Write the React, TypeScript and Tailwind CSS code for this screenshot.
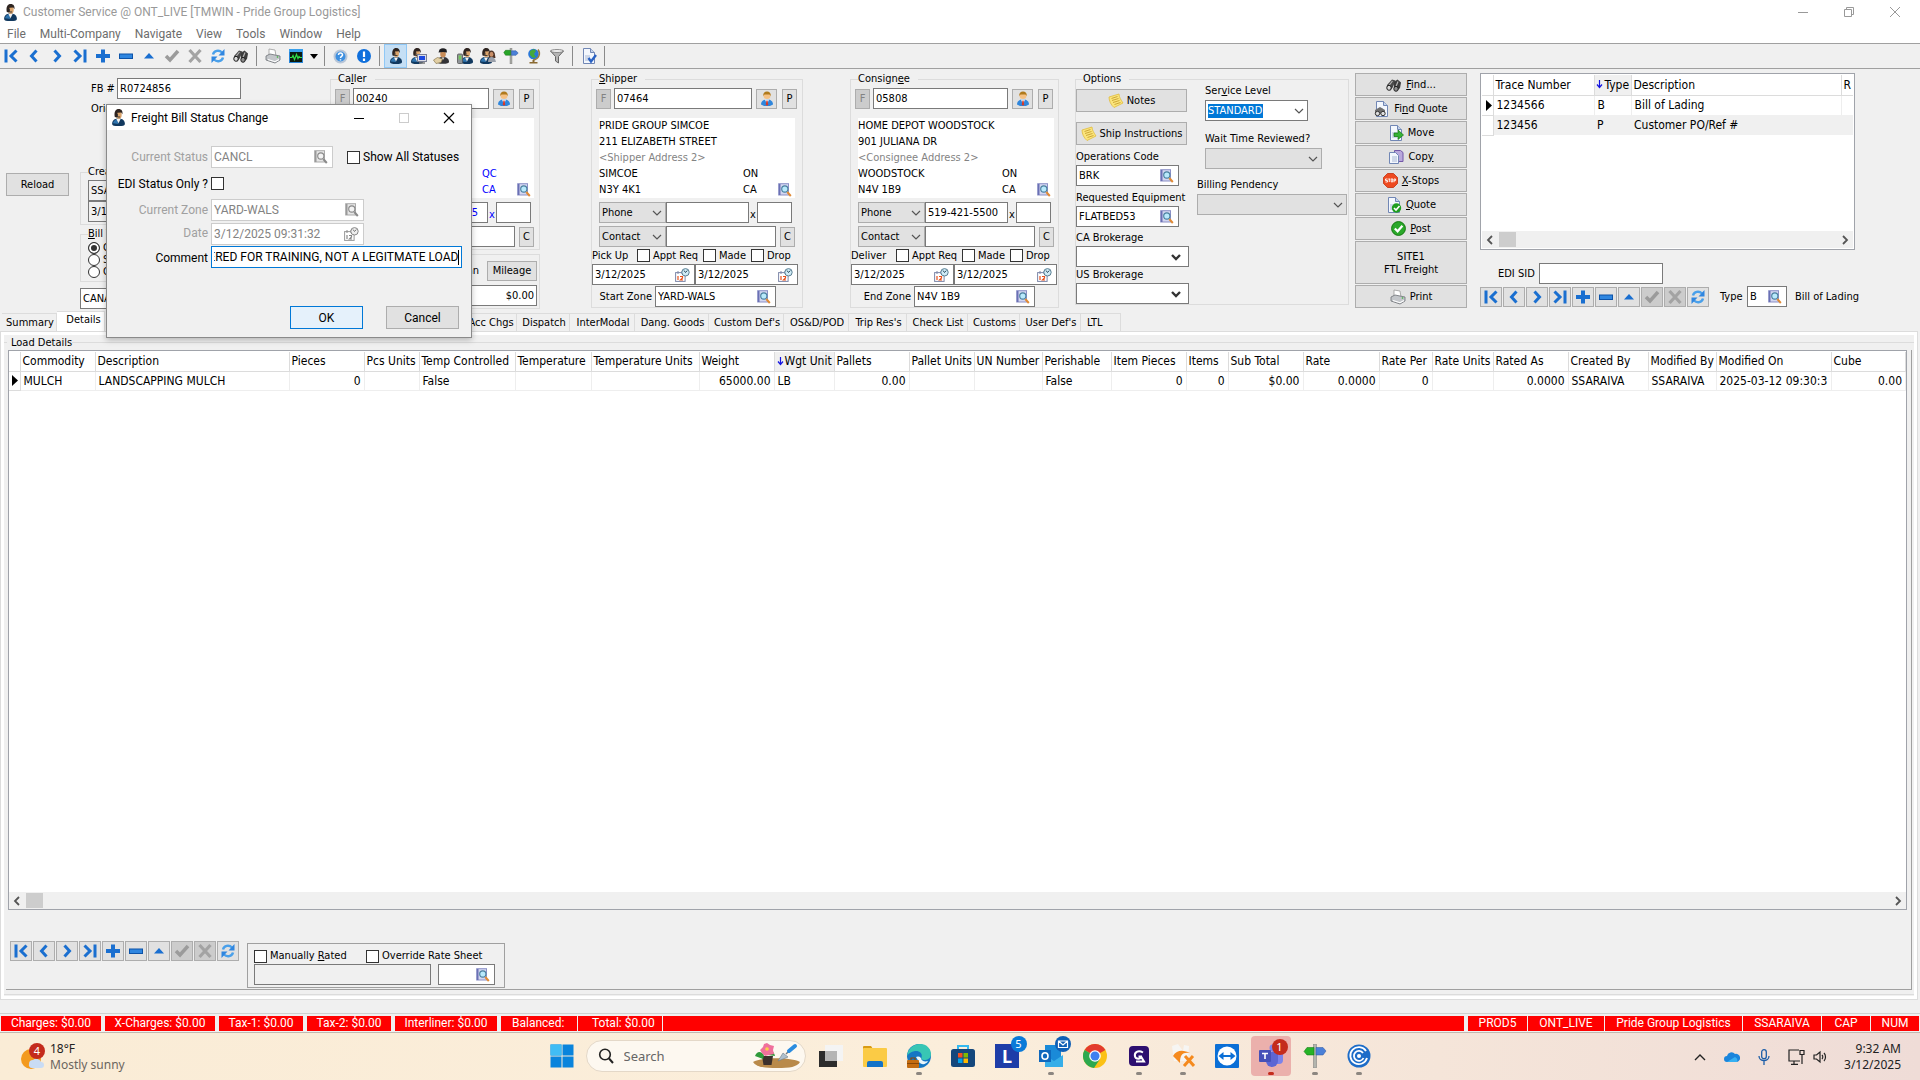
import { useEffect, useRef, type ReactNode } from 'react';
import { clsx } from 'clsx';
import { twMerge } from 'tailwind-merge';

/* ---------- icons ---------- */

function AgentIcon({ size = 16, kind = 'plain' }: { size?: number; kind?: 'plain' | 'pc' | 'phone' | 'pair' }) {
  return (
    <svg width={size} height={size} viewBox="0 0 16 16" className="shrink-0">
      <g transform={kind === 'plain' ? 'translate(2 0)' : kind === 'phone' ? 'translate(4 0)' : ''}>
        <path d="M0 14c0-3 2-5 6-5s6 2 6 5c0 1.500-2 2-6 2s-6-.5-6-2z" fill="#12395f" />
        <path d="M.8 13.500c.4-2.300 2-3.600 4-3.800L6 14z" fill="#2f74ae" />
        <path d="M4 9.500h4L6 13.500z" fill="#f4f4f4" />
        <ellipse cx="6.300" cy="5.500" rx="2.700" ry="3.800" fill="#dca56c" />
        <path d="M2.500 7.500C1.500 2.500 3.500 0 6.200 0s4 2 3.500 5L8.600 3.200 5 3.500 4.600 8z" fill="#2e2420" />
        <path d="M5 4.500v3h2.500" fill="none" stroke="#333" strokeWidth=".9" />
      </g>
      {kind === 'pair' && (
        <>
          <path d="M8.500 7c-1-6 6.500-6 6.500 0l.5 3H9z" fill="#4e3326" />
          <ellipse cx="11.500" cy="6.300" rx="1.900" ry="2.500" fill="#c98f68" />
          <path d="M8 14c0-3.500 1.500-5 3.500-5s4 1.500 4.500 5z" fill="#9aa0aa" />
        </>
      )}
      {kind === 'pc' && (
        <>
          <rect x="6.500" y="6.500" width="9" height="7" fill="#dcdde6" stroke="#7a7f94" />
          <rect x="8" y="8" width="6" height="4" fill="#1c49e0" />
          <path d="M8 15h6" stroke="#777" strokeWidth="1.500" />
        </>
      )}
      {kind === 'phone' && (
        <>
          <rect x=".5" y="6" width="5" height="9.500" rx="1" fill="#8f9498" stroke="#555" strokeWidth=".8" />
          <rect x="1.700" y="7.500" width="2.600" height="4" fill="#74c95a" />
        </>
      )}
    </svg>
  );
}

function DriverIcon() {
  return (
    <svg width="17" height="16" viewBox="0 0 17 16" className="shrink-0">
      <path d="M4 14c0-3 2-5 6-5s6 2 6 5c0 1-2 1.800-6 1.800S4 15 4 14z" fill="#333336" />
      <ellipse cx="10" cy="6" rx="2.800" ry="3.500" fill="#c98d58" />
      <path d="M5.500 4.500l1-3Q10-.8 13.500 1.500L14 4.500 10 4z" fill="#1f1f22" />
      <path d="M8.500 9.500h3L10 12z" fill="#d8d8d8" />
      <path d="M.5 12l4-2.500 5 1.500-1.500 3.500-5 1z" fill="#e2cfa4" stroke="#8a7850" strokeWidth=".7" />
    </svg>
  );
}

function NavGlyph({ name, size = 16 }: { name: string; size?: number }) {
  const blue = { fill: 'none', stroke: '#1a6fd0', strokeWidth: 3 };
  return (
    <svg width={size} height={size} viewBox="0 0 16 16" className="shrink-0">
      {name === 'First' && <path d="M3 1.500v13M13.500 2.500L8 8l5.500 5.500" {...blue} />}
      {name === 'Previous' && <path d="M10.500 2.500L5.500 8l5 5.500" {...blue} />}
      {name === 'Next' && <path d="M5.500 2.500l5 5.500-5 5.500" {...blue} />}
      {name === 'Last' && <path d="M13 1.500v13M2.500 2.500L8 8l-5.500 5.500" {...blue} />}
      {name === 'Insert' && <path d="M8 1.500v13M1 8h14" {...blue} strokeWidth={4} />}
      {name === 'Delete' && <rect x="1.500" y="6" width="13" height="4.500" fill="#2f86e0" stroke="#0d53a8" />}
      {name === 'Edit' && <path d="M8 5l5 5.500H3z" fill="#1a6fd0" />}
      {name === 'Post edit' && <path d="M2 8l4 4 8-9" fill="none" stroke="#9b9b9b" strokeWidth="3.500" />}
      {name === 'Cancel edit' && <path d="M2.500 2l11 12M13.500 2l-11 12" fill="none" stroke="#a3a3a3" strokeWidth="3.200" />}
      {name === 'Refresh' && (
        <>
          <path d="M3 6.500C4 2.500 9 1.500 12 4.500" fill="none" stroke="#4aa0ea" strokeWidth="2.400" />
          <path d="M14.500 1v6.500H8.500z" fill="#2f86e0" />
          <path d="M13 9.500c-1 4-6 5-9 2" fill="none" stroke="#4aa0ea" strokeWidth="2.400" />
          <path d="M1.500 15V8.500h6z" fill="#2f86e0" />
        </>
      )}
    </svg>
  );
}

function BinocularsIcon() {
  return (
    <svg width="16" height="14" viewBox="0 0 16 14" className="shrink-0">
      <path d="M1 7l5-5.500 3.500 1L7 9l-2.500 3.500L.8 11z" fill="#4a4a4a" />
      <path d="M8 4l3.500-2.500L15 4.500 14 10l-3 3-3-2.500z" fill="#3c3c3c" />
      <path d="M3 7.500L6.500 3M10 8.500l2-5" stroke="#b5b5b5" strokeWidth="1.200" />
      <ellipse cx="3" cy="9.800" rx="2.200" ry="2.500" fill="#d8d8d8" stroke="#222" />
      <ellipse cx="10" cy="10.800" rx="2.200" ry="2.500" fill="#8d8d8d" stroke="#222" />
    </svg>
  );
}

function PrinterIcon() {
  return (
    <svg width="16" height="16" viewBox="0 0 16 16" className="shrink-0">
      <path d="M4 1l6 1 1 6-7 1z" fill="#fff" stroke="#9a9a9a" strokeWidth=".8" />
      <path d="M1 8l4-2 10 2v4l-5 3-9-3z" fill="#c3c6ca" stroke="#6d7176" strokeWidth=".8" />
      <path d="M3 11.500l7 2.200 4-2.200" fill="none" stroke="#fff" strokeWidth="1.200" />
      <circle cx="12.500" cy="9" r=".8" fill="#35b335" />
    </svg>
  );
}

function LookupIcon({ muted = false }: { muted?: boolean }) {
  return (
    <svg width="14" height="14" viewBox="0 0 14 14" className="shrink-0">
      <rect x=".7" y=".7" width="9.800" height="11.300" fill={muted ? '#e6e6e6' : '#d3d6f0'} stroke={muted ? '#aaa' : '#8b90c6'} strokeWidth="1" />
      <path d="M1.700 1v11" stroke={muted ? '#999' : '#6a70b4'} strokeWidth="1.600" />
      <circle cx="6.800" cy="6" r="3.100" fill={muted ? '#f3f3f3' : '#b8e9fb'} stroke={muted ? '#8a8a8a' : '#49809f'} strokeWidth="1.100" />
      <path d="M9.300 9l3.500 4" stroke={muted ? '#8a8a8a' : '#e08a35'} strokeWidth="2" />
    </svg>
  );
}

function CalendarIcon({ muted = false }: { muted?: boolean }) {
  return (
    <svg width="15" height="14" viewBox="0 0 15 14" className="shrink-0">
      <rect x=".6" y="4.600" width="9.500" height="8.800" fill="#fff" stroke={muted ? '#999' : '#7d87a8'} />
      <path d="M3 3v3M7 3v3" stroke={muted ? '#888' : '#7d87a8'} />
      <path d="M3 8v4M5 8.500h2.500v1.500L5.500 12H8" fill="none" stroke={muted ? '#888' : '#e8501c'} strokeWidth="1.200" />
      <circle cx="10.500" cy="4.300" r="3.700" fill={muted ? '#eee' : '#cfeaf5'} stroke={muted ? '#888' : '#5b7f93'} />
      <path d="M9 2.500l1.500 2L12.300 2.500" fill="none" stroke={muted ? '#777' : '#2c4d60'} />
    </svg>
  );
}

function PersonIcon() {
  return (
    <svg width="14" height="16" viewBox="0 0 14 16" className="shrink-0">
      <path d="M1 13.500C1 10.500 3 8.500 7 8.500s6 2 6 5L10 15H4z" fill="#2f86dc" />
      <path d="M5 8.500h4l-2 5z" fill="#fff" />
      <path d="M6.400 9.500h1.200l.6 4L7 15l-1.200-1.500z" fill="#d43a2a" />
      <circle cx="7" cy="4.500" r="3.500" fill="#f5c184" />
      <path d="M3.300 5C3 2 4.500.5 7 .5S11 2 10.700 5L9.500 3.500h-5z" fill="#b07a1c" />
    </svg>
  );
}

function NoteIcon() {
  return (
    <svg width="16" height="16" viewBox="0 0 16 16" className="shrink-0">
      <path d="M1 4l10-3c0 3 2 6 4 9L6 14.500C3 12 1 8 1 4z" fill="#fbe57c" stroke="#e0bb3c" strokeWidth=".8" />
      <path d="M3.500 5.500l6-2M4 7.500l6.500-2M5 9.500l6.500-2M6.500 11.500l6-2" stroke="#c79f2e" strokeWidth=".9" />
    </svg>
  );
}

function DocIcon({ badge }: { badge: 'find' | 'move' | 'copy' | 'ok' | 'check' }) {
  return (
    <svg width="16" height="16" viewBox="0 0 16 16" className="shrink-0">
      {badge === 'copy' && <path d="M6.500 1.500h6l2.500 2v9H6.500z" fill="#b9a8dc" stroke="#7358a8" />}
      <path d={badge === 'copy' ? 'M1.500 3.500h6l3 3v8h-9z' : 'M2.500.5h7l4 4v11h-11z'} fill="#f3f7fd" stroke="#7187b5" />
      {badge !== 'copy' && <path d="M9.500.5v4h4" fill="#c5d3ea" stroke="#7187b5" />}
      <path d="M4 8h5M4 10h5M4 12h5" stroke="#a9b8d4" />
      {badge === 'move' && <path d="M6 8h4V5l5.500 5L10 14.500v-3H6z" fill="#35b335" stroke="#12700f" strokeWidth=".7" />}
      {badge === 'ok' && (
        <>
          <circle cx="10.500" cy="11" r="4.700" fill="#1f9e1f" />
          <path d="M8 11l2 2 3.500-4" fill="none" stroke="#fff" strokeWidth="1.600" />
        </>
      )}
      {badge === 'check' && <path d="M7.500 10l2.500 3.500L15 7" fill="none" stroke="#2a62c4" strokeWidth="2.400" />}
      {badge === 'find' && (
        <>
          <path d="M1 9l5-3 5 3v4H1z" fill="#6f6f6f" />
          <circle cx="3.500" cy="12.500" r="2.200" fill="#ddd" stroke="#333" />
          <circle cx="9" cy="12.500" r="2.200" fill="#ddd" stroke="#333" />
        </>
      )}
    </svg>
  );
}

function StopIcon() {
  return (
    <svg width="15" height="15" viewBox="0 0 15 15" className="shrink-0">
      <path d="M4.500.5h6l4 4v6l-4 4h-6l-4-4v-6z" fill="#ee4a20" stroke="#c22f0c" strokeWidth=".8" />
      <path d="M4.500 6h-2v1.500h2V9h-2M5.300 6h2M6.300 6v3M8.200 5.900h1.500v3H8.200zM11 9.300V6h1.600v1.700H11" fill="none" stroke="#fff" strokeWidth=".9" />
    </svg>
  );
}

function OkIcon() {
  return (
    <svg width="15" height="15" viewBox="0 0 15 15" className="shrink-0">
      <circle cx="7.500" cy="7.500" r="6.900" fill="#2aa82a" stroke="#14780f" />
      <path d="M3.800 7.500l2.800 2.800 4.800-5.500" fill="none" stroke="#fff" strokeWidth="2.200" />
    </svg>
  );
}

function SignpostIcon() {
  return (
    <svg width="16" height="16" viewBox="0 0 16 16" className="shrink-0">
      <rect x="7" y="0" width="2" height="16" fill="#a9aaa5" stroke="#777" strokeWidth=".4" />
      <path d="M7.500 2.300H2.500L.8 4.500l1.700 2.700h5z" fill="#27a427" stroke="#0f700f" strokeWidth=".5" />
      <path d="M8.500 2.800h4.500l2.200 2.200L13 7.300H8.500z" fill="#4b80d8" stroke="#2a559e" strokeWidth=".5" />
    </svg>
  );
}

function GlobeIcon() {
  return (
    <svg width="16" height="16" viewBox="0 0 16 16" className="shrink-0">
      <circle cx="7.500" cy="6" r="5.300" fill="#2a78d8" />
      <path d="M4 3l4-2 2 2-2 3 2 3-3 1-3-3z" fill="#46a83c" />
      <path d="M12 1.500c3 4 1 10-5 10.500" fill="none" stroke="#9c7a3c" strokeWidth="1.500" />
      <path d="M6.500 12h2v2h3v1.500h-8V14h3z" fill="#8a6a32" />
    </svg>
  );
}

function Chevron({ bold = false }: { bold?: boolean }) {
  return (
    <svg width="12" height="8" viewBox="0 0 12 8" className="shrink-0 pointer-events-none">
      <path d="M2 2l4 4 4-4" fill="none" stroke={bold ? '#333' : '#555'} strokeWidth={bold ? 2.400 : 1.200} />
    </svg>
  );
}

function SortArrow() {
  return (
    <svg width="7" height="9" viewBox="0 0 7 9" className="shrink-0">
      <path d="M3.500 0v7M1 4.500L3.500 7.500 6 4.500" fill="none" stroke="#1414e0" strokeWidth="1.200" />
    </svg>
  );
}

/* ---------- form controls ---------- */

function Field({ label, value = '', className, icon, align }: {
  label: string;
  value?: string;
  className?: string;
  icon?: ReactNode;
  align?: 'right';
}) {
  return (
    <div className={twMerge('flex h-[21px] items-center border border-[#7a7a7a] bg-white pl-0.5', icon ? 'pr-1' : 'pr-0.5', className)}>
      <input aria-label={label} defaultValue={value} className={clsx('w-0 min-w-0 flex-1 bg-transparent outline-none', align === 'right' && 'text-right')} />
      {icon}
    </div>
  );
}

function Combo({ label, value = '', className, bold, grey, highlight }: {
  label: string;
  value?: string;
  className?: string;
  bold?: boolean;
  grey?: boolean;
  highlight?: boolean;
}) {
  return (
    <div className={clsx('flex h-[21px] items-center border pl-0.5', bold ? 'pr-1.5' : 'pr-0.5', grey ? 'border-[#adadad] bg-[#e1e1e1]' : 'border-[#7a7a7a] bg-white', className)}>
      <div className="flex min-w-0 flex-1">
        <select aria-label={label} className={clsx('appearance-none outline-none leading-[14px]', highlight ? 'bg-[#0078d7] text-white' : 'w-full bg-transparent')}>
          <option>{value}</option>
        </select>
      </div>
      <Chevron bold={bold} />
    </div>
  );
}

function Check({ label, className, children }: { label?: string; className?: string; children?: ReactNode }) {
  return (
    <label className={clsx('flex items-center gap-[3px] whitespace-nowrap', className)}>
      <input type="checkbox" aria-label={label} className="size-[13px] shrink-0 appearance-none border border-[#333] bg-white" />
      {children}
    </label>
  );
}

function Btn({ children, className, disabled }: { children: ReactNode; className?: string; disabled?: boolean }) {
  return (
    <button
      type="button"
      disabled={disabled}
      className={clsx(
        'flex shrink-0 items-center justify-center border border-[#adadad]',
        disabled ? 'bg-[#cccccc] text-[#838383]' : 'bg-[#e1e1e1]',
        className,
      )}
    >
      {children}
    </button>
  );
}

function Group({ title, className, children }: { title: ReactNode; className?: string; children: ReactNode }) {
  return (
    <fieldset className={clsx('min-w-0 border border-[#dcdcdc]', className)}>
      <legend className="ml-[7px] pr-2">{title}</legend>
      {children}
    </fieldset>
  );
}

const NAV = ['First', 'Previous', 'Next', 'Last', 'Insert', 'Delete', 'Edit', 'Post edit', 'Cancel edit', 'Refresh'];

function Navigator() {
  return (
    <div className="flex gap-px">
      {NAV.map(n => (
        <button
          key={n}
          type="button"
          aria-label={n}
          className={clsx('flex h-5 w-[22px] items-center justify-center border border-[#adadad]', n.endsWith(' edit') ? 'bg-[#cccccc]' : 'bg-[#e1e1e1]')}
        >
          <NavGlyph name={n} />
        </button>
      ))}
    </div>
  );
}

function ScrollBar() {
  return (
    <div className="flex h-[17px] items-center justify-between bg-[#f0f0f0] px-1">
      <div className="flex h-full items-center gap-[5px]">
        <svg width="8" height="10" viewBox="0 0 8 10"><path d="M6 1L2 5l4 4" fill="none" stroke="#555" strokeWidth="1.800" /></svg>
        <div className="h-[15px] w-[17px] bg-[#cdcdcd]" />
      </div>
      <svg width="8" height="10" viewBox="0 0 8 10"><path d="M2 1l4 4-4 4" fill="none" stroke="#555" strokeWidth="1.800" /></svg>
    </div>
  );
}

/* ---------- header panels ---------- */

interface Party {
  title: ReactNode;
  name: string;
  code: string;
  lines: string[];
  hint: string;
  city: string;
  postal: string;
  province: string;
  country: string;
  phone: string;
  caller?: boolean;
  when?: string;
  zoneLabel?: string;
  zone?: string;
}

function PartyGroup({ p, className }: { p: Party; className?: string }) {
  return (
    <Group title={p.title} className={className}>
      <div className="flex items-center pl-1 pr-[5px] pt-px">
        <Btn disabled className="h-5 w-[15px]">F</Btn>
        <Field label={`${p.name} code`} value={p.code} className="ml-[3px] min-w-0 flex-1" />
        <Btn className="ml-1 h-5 w-[21px]"><PersonIcon /></Btn>
        <Btn className="ml-[5px] h-5 w-[15px]">P</Btn>
      </div>
      <div className={clsx('ml-[7px] mt-[9px] w-[196px] bg-white', p.caller && 'text-[#0000ff]')}>
        <div className="h-4">{p.lines[0]}</div>
        <div className="h-4">{p.lines[1]}</div>
        <div className="h-4 text-[#838383]">{p.hint}</div>
        <div className="flex">
          <span className="w-36">{p.city}</span>
          <span>{p.province}</span>
        </div>
        <div className="flex items-center">
          <span className="w-36">{p.postal}</span>
          <span className="flex-1">{p.country}</span>
          <span className="mr-[3px]"><LookupIcon /></span>
        </div>
      </div>
      <div className="ml-[7px] mt-1 flex items-center">
        <Combo label={`${p.name} phone type`} value="Phone" grey className="w-[67px]" />
        <Field label={`${p.name} phone`} value={p.phone} className={clsx('w-[83px]', p.caller && 'text-[#0000ff]')} />
        <span className={clsx('w-2 self-end text-center', p.caller && 'text-[#0000ff]')}>x</span>
        <Field label={`${p.name} extension`} className="w-[35px]" />
      </div>
      <div className="ml-[7px] mt-[3px] flex items-center">
        <Combo label={`${p.name} contact type`} value="Contact" grey className="w-[67px]" />
        <Field label={`${p.name} contact`} className="w-[110px]" />
        <Btn className="ml-1 h-5 w-[15px]">C</Btn>
      </div>
      {p.when && (
        <>
          <div className="flex h-[17px] items-center">
            <span className="w-[45px]">{p.when}</span>
            <Check className="w-[66px]">Appt Req</Check>
            <Check className="w-12">Made</Check>
            <Check>Drop</Check>
          </div>
          <div className="flex">
            <Field label={`${p.when} from`} value="3/12/2025" icon={<CalendarIcon />} className="w-[103px]" />
            <Field label={`${p.when} to`} value="3/12/2025" icon={<CalendarIcon />} className="w-[103px]" />
          </div>
          <div className="mt-px flex items-center">
            <span className="w-[60px] text-right">{p.zoneLabel}</span>
            <Field label={p.zoneLabel!} value={p.zone} icon={<LookupIcon />} className="ml-[3px] w-[121px]" />
          </div>
        </>
      )}
    </Group>
  );
}

const CALLER: Party = {
  title: <>Ca<u>l</u>ler</>, name: 'Caller', code: '00240', lines: ['', ''], hint: '', city: '', postal: '',
  province: 'QC', country: 'CA', phone: '514-555-0155', caller: true,
};
const SHIPPER: Party = {
  title: <><u>S</u>hipper</>, name: 'Shipper', code: '07464', lines: ['PRIDE GROUP SIMCOE', '211 ELIZABETH STREET'],
  hint: '<Shipper Address 2>', city: 'SIMCOE', postal: 'N3Y 4K1', province: 'ON', country: 'CA', phone: '',
  when: 'Pick Up', zoneLabel: 'Start Zone', zone: 'YARD-WALS',
};
const CONSIGNEE: Party = {
  title: <>Consign<u>e</u>e</>, name: 'Consignee', code: '05808', lines: ['HOME DEPOT WOODSTOCK', '901 JULIANA DR'],
  hint: '<Consignee Address 2>', city: 'WOODSTOCK', postal: 'N4V 1B9', province: 'ON', country: 'CA', phone: '519-421-5500',
  when: 'Deliver', zoneLabel: 'End Zone', zone: 'N4V 1B9',
};

function BillColumn() {
  return (
    <div className="w-[330px] shrink-0 pt-[5px]">
      <label className="flex items-center pl-[91px]">
        <span className="w-[26px]">FB #</span>
        <Field label="FB #" value="R0724856" className="w-[124px]" />
      </label>
      <div className="mt-0.5 pl-[91px]">Original</div>
      <div className="mt-[47px] flex items-start">
        <div className="w-20 pl-1.5 pt-[9px]">
          <Btn className="h-[23px] w-[63px]">Reload</Btn>
        </div>
        <div className="w-60">
          <Group title="Created">
            <div className="px-[7px] pb-0.5">
              <Field label="Created by" value="SSARAIVA" className="bg-[#f0f0f0]" />
              <Field label="Created on" value="3/12/2025" className="bg-[#f0f0f0]" />
            </div>
          </Group>
          <Group title={<><u>B</u>ill Type</>} className="mt-px">
            <div className="px-[7px] pb-[3px]">
              {['Collect', 'Shared', 'Quote'].map((t, i) => (
                <label key={t} className="flex h-3 items-center gap-[3px]">
                  <input
                    type="radio"
                    name="billType"
                    defaultChecked={i === 0}
                    className="size-3 appearance-none rounded-full border border-[#333] bg-white checked:bg-[#333] checked:shadow-[inset_0_0_0_2px_#fff]"
                  />
                  {t}
                </label>
              ))}
            </div>
          </Group>
          <Combo label="Currency" value="CANADA" className="mt-1.5" />
        </div>
      </div>
    </div>
  );
}

function OptionsGroup() {
  return (
    <Group title="Options" className="w-[274px] shrink-0">
      <div className="flex items-start">
        <div className="w-[113px]">
          <Btn className="mt-0.5 h-[23px] w-[111px] gap-[3px]"><NoteIcon /> Notes</Btn>
          <Btn className="mt-2.5 h-[23px] w-[111px] gap-[3px]"><NoteIcon /> Ship Instructions</Btn>
          <div className="mt-1">Operations Code</div>
          <Field label="Operations Code" value="BRK" icon={<LookupIcon />} className="w-[103px]" />
          <div className="mt-1 whitespace-nowrap">Requested Equipment</div>
          <Field label="Requested Equipment" value="FLATBED53" icon={<LookupIcon />} className="w-[103px]" />
          <div className="mt-[3px]">CA Brokerage</div>
          <Combo label="CA Brokerage" bold className="w-[113px]" />
          <div>US Brokerage</div>
          <Combo label="US Brokerage" bold className="w-[113px]" />
        </div>
        <div className="flex-1 pl-2">
          <div className="pl-2">
            <div className="-mt-1">Ser<u>v</u>ice Level</div>
            <Combo label="Service Level" value="STANDARD" highlight className="mt-px w-[103px]" />
            <div className="mt-2.5">Wait Time Reviewed?</div>
            <Combo label="Wait Time Reviewed?" grey className="mt-px w-[117px]" />
          </div>
          <div className="mt-2">Billing Pendency</div>
          <Combo label="Billing Pendency" grey className="mt-px w-[150px]" />
        </div>
      </div>
    </Group>
  );
}

function ActionColumn() {
  return (
    <div className="flex w-28 shrink-0 flex-col gap-px">
      <Btn className="h-[23px] gap-1"><BinocularsIcon /><span><u>F</u>ind...</span></Btn>
      <Btn className="h-[23px] gap-1"><DocIcon badge="find" /><span>Fi<u>n</u>d Quote</span></Btn>
      <Btn className="h-[23px] gap-1"><DocIcon badge="move" />Move</Btn>
      <Btn className="h-[23px] gap-1"><DocIcon badge="copy" /><span>Cop<u>y</u></span></Btn>
      <Btn className="h-[23px] gap-1"><StopIcon /><span><u>X</u>-Stops</span></Btn>
      <Btn className="h-[23px] gap-1"><DocIcon badge="ok" /><span><u>Q</u>uote</span></Btn>
      <Btn className="h-[23px] gap-1"><OkIcon /><span><u>P</u>ost</span></Btn>
      <Btn className="h-[43px] leading-[13px]"><span>SITE1<br />FTL Freight</span></Btn>
      <Btn className="h-[23px] gap-1"><PrinterIcon />Print</Btn>
    </div>
  );
}

function TracePanel() {
  return (
    <div className="min-w-0 flex-1 pr-2">
      <div className="mr-[57px] flex h-[177px] flex-col border border-[#a0a3aa] bg-white p-px text-[12px]">
        <table className="w-full table-fixed border-collapse text-left">
          <colgroup>
            <col className="w-[11px]" />
            <col className="w-[101px]" />
            <col className="w-[37px]" />
            <col />
            <col className="w-3" />
          </colgroup>
          <thead>
            <tr className="h-5 border-b border-[#dcdcdc]">
              <th className="border-r border-[#dcdcdc]"></th>
              <th className="border-r border-[#dcdcdc] px-0.5 font-normal">Trace Number</th>
              <th className="border-r border-[#dcdcdc] bg-[#f0f0f0] font-normal">
                <span className="flex items-center gap-0.5 pl-px"><SortArrow />Type</span>
              </th>
              <th className="border-r border-[#dcdcdc] px-0.5 font-normal">Description</th>
              <th className="overflow-hidden pl-0.5 font-normal">R</th>
            </tr>
          </thead>
          <tbody>
            <tr className="h-5">
              <td className="border-r border-b border-[#dcdcdc]">
                <svg width="7" height="11" viewBox="0 0 7 11" className="ml-1"><path d="M0 0l6 5.500L0 11z" /></svg>
              </td>
              <td className="border-r border-[#eee] pl-[3px]">1234566</td>
              <td className="border-r border-[#eee] pl-[3px]">B</td>
              <td className="border-r border-[#eee] pl-[3px]">Bill of Lading</td>
              <td></td>
            </tr>
            <tr className="h-5 bg-[#f0f0f0]">
              <td className="border-r border-b border-[#dcdcdc] bg-white"></td>
              <td className="pl-[3px]">123456</td>
              <td className="pl-[3px]">P</td>
              <td className="pl-[3px]">Customer PO/Ref #</td>
              <td></td>
            </tr>
          </tbody>
        </table>
        <div className="flex-1" />
        <ScrollBar />
      </div>
      <label className="mt-[13px] flex items-center pl-[18px]">
        <span className="w-[41px]">EDI SID</span>
        <Field label="EDI SID" className="w-[124px]" />
      </label>
      <div className="mt-0.5 flex items-center">
        <Navigator />
        <span className="ml-[11px] w-[27px]">Type</span>
        <Field label="Type" value="B" icon={<LookupIcon />} className="w-10" />
        <span className="ml-2">Bill of Lading</span>
      </div>
    </div>
  );
}

/* ---------- load details ---------- */

interface Column {
  head: string;
  value: string;
  width: string;
  right?: boolean;
}

const COLUMNS: Column[] = [
  { head: 'Commodity', value: 'MULCH', width: 'w-[75px]' },
  { head: 'Description', value: 'LANDSCAPPING MULCH', width: 'w-[194px]' },
  { head: 'Pieces', value: '0', width: 'w-[75px]', right: true },
  { head: 'Pcs Units', value: '', width: 'w-[55px]' },
  { head: 'Temp Controlled', value: 'False', width: 'w-[96px]' },
  { head: 'Temperature', value: '', width: 'w-[76px]' },
  { head: 'Temperature Units', value: '', width: 'w-[108px]' },
  { head: 'Weight', value: '65000.00', width: 'w-[75px]', right: true },
  { head: 'Wgt Unit', value: 'LB', width: 'w-[60px]' },
  { head: 'Pallets', value: '0.00', width: 'w-[75px]', right: true },
  { head: 'Pallet Units', value: '', width: 'w-[65px]' },
  { head: 'UN Number', value: '', width: 'w-[68px]' },
  { head: 'Perishable', value: 'False', width: 'w-[69px]' },
  { head: 'Item Pieces', value: '0', width: 'w-[75px]', right: true },
  { head: 'Items', value: '0', width: 'w-[42px]', right: true },
  { head: 'Sub Total', value: '$0.00', width: 'w-[75px]', right: true },
  { head: 'Rate', value: '0.0000', width: 'w-[76px]', right: true },
  { head: 'Rate Per', value: '0', width: 'w-[53px]', right: true },
  { head: 'Rate Units', value: '', width: 'w-[61px]' },
  { head: 'Rated As', value: '0.0000', width: 'w-[75px]', right: true },
  { head: 'Created By', value: 'SSARAIVA', width: 'w-[80px]' },
  { head: 'Modified By', value: 'SSARAIVA', width: 'w-[68px]' },
  { head: 'Modified On', value: '2025-03-12 09:30:3', width: 'w-[115px]' },
  { head: 'Cube', value: '0.00', width: 'w-auto', right: true },
];

function LoadGrid() {
  return (
    <div className="ml-0.5 mr-1 flex flex-1 flex-col overflow-hidden border border-[#a0a3aa] bg-white pt-px text-[12px]">
      <table className="w-full table-fixed border-collapse whitespace-nowrap text-left">
        <colgroup>
          <col className="w-[11px]" />
          {COLUMNS.map(c => <col key={c.head} className={c.width} />)}
        </colgroup>
        <thead>
          <tr className="h-[19px]">
            <th className="border-r border-b border-[#dcdcdc]"></th>
            {COLUMNS.map(c => (
              <th key={c.head} className={clsx('overflow-hidden border-r border-b border-[#dcdcdc] pl-0.5 font-normal', c.head === 'Wgt Unit' && 'bg-[#f0f0f0]')}>
                {c.head === 'Wgt Unit' ? <span className="flex items-center gap-px"><SortArrow />{c.head}</span> : c.head}
              </th>
            ))}
          </tr>
        </thead>
        <tbody>
          <tr className="h-[19px]">
            <td className="border-r border-b border-[#dcdcdc]">
              <svg width="7" height="11" viewBox="0 0 7 11" className="ml-[3px]"><path d="M0 0l6 5.500L0 11z" /></svg>
            </td>
            {COLUMNS.map(c => (
              <td key={c.head} className={clsx('overflow-hidden border-r border-b border-[#eee]', c.right ? 'pr-[3px] text-right' : 'pl-[3px]')}>
                {c.value}
              </td>
            ))}
          </tr>
        </tbody>
      </table>
      <div className="flex-1" />
      <ScrollBar />
    </div>
  );
}

const TABS = [
  { t: 'Summary', w: 'w-[55px]' },
  { t: 'Details', w: 'w-12' },
  { t: '', w: 'w-[359px]' },
  { t: 'Acc Chgs', w: 'w-[53px]' },
  { t: 'Dispatch', w: 'w-[53px]' },
  { t: 'InterModal', w: 'w-[65px]' },
  { t: 'Dang. Goods', w: 'w-[74px]' },
  { t: "Custom Def's", w: 'w-[75px]' },
  { t: 'OS&D/POD', w: 'w-[65px]' },
  { t: "Trip Res's", w: 'w-[58px]' },
  { t: 'Check List', w: 'w-[61px]' },
  { t: 'Customs', w: 'w-[52px]' },
  { t: "User Def's", w: 'w-[61px]' },
  { t: 'LTL', w: 'w-10' },
];

function Details() {
  return (
    <div className="flex flex-1 flex-col">
      <div role="tablist" className="flex items-end pl-0.5">
        {TABS.map(({ t, w }) => t ? (
          <button
            key={t}
            type="button"
            role="tab"
            aria-selected={t === 'Details'}
            className={clsx(
              'flex shrink-0 items-center whitespace-nowrap border-r border-t border-[#dcdcdc]',
              t === 'Details' ? 'h-5 bg-white pb-1 pl-1.5' : 'h-[18px]',
              t === 'LTL' ? 'pl-1.5' : 'justify-center pl-0.5',
              w,
            )}
          >
            {t}
          </button>
        ) : <div key="gap" className={w} />)}
      </div>
      <div className="mr-0.5 flex flex-1 flex-col border border-[#dcdcdc] bg-white p-[3px]">
        <section className="flex flex-1 flex-col bg-[#f0f0f0]">
          <div className="flex h-[15px] items-center">
            <div className="mr-1 h-px w-[3px] bg-[#dcdcdc]" />
            <h2>Load Details</h2>
            <div className="h-px flex-1 bg-[#dcdcdc]" />
          </div>
          <div className="mx-0.5 flex flex-1 flex-col border-b border-r border-[#a0a0a0]">
            <LoadGrid />
            <div className="flex items-start pb-px pl-1 pt-[31px]">
              <Navigator />
              <div className="ml-2 mt-0.5 w-[258px] border border-[#a0a0a0] px-1.5 pb-0.5 pt-1">
                <div className="flex h-4 items-center">
                  <Check className="w-28"><span>Manually <u>R</u>ated</span></Check>
                  <Check>Override Rate Sheet</Check>
                </div>
                <div className="flex">
                  <Field label="Rate sheet name" className="w-[177px] bg-[#f0f0f0]" />
                  <Field label="Rate sheet" icon={<LookupIcon />} className="ml-[7px] w-[57px]" />
                </div>
              </div>
            </div>
          </div>
          <div className="mb-px mt-1 h-px bg-[#dcdcdc]" />
        </section>
      </div>
    </div>
  );
}

/* ---------- dialog ---------- */

function StatusDialog() {
  const comment = useRef<HTMLInputElement>(null);

  // keep the end of the comment in view
  useEffect(() => {
    if (comment.current) comment.current.scrollLeft = comment.current.scrollWidth;
  }, []);

  return (
    <div role="dialog" aria-label="Freight Bill Status Change" className="absolute left-[106px] top-[104px] w-[366px] border border-[#8a8a8a] bg-[#f0f0f0] font-['Roboto','Noto_Sans',sans-serif] text-[12px] shadow-[0_2px_6px_rgba(0,0,0,0.25)]">
      <div className="flex h-[25px] items-center bg-white pl-[3px]">
        <AgentIcon size={17} />
        <span className="ml-1 flex-1">Freight Bill Status Change</span>
        <button type="button" aria-label="Minimize" className="flex w-[45px] justify-center">
          <svg width="10" height="10"><path d="M0 5.500h10" stroke="#000" /></svg>
        </button>
        <button type="button" aria-label="Maximize" className="flex w-[45px] justify-center">
          <svg width="10" height="10"><rect x=".5" y=".5" width="9" height="9" fill="none" stroke="#ccc" /></svg>
        </button>
        <button type="button" aria-label="Close" className="flex w-[45px] justify-center">
          <svg width="12" height="12"><path d="M1 1l10 10M11 1L1 11" stroke="#000" strokeWidth="1.200" /></svg>
        </button>
      </div>
      <div className="grid grid-cols-[101px_1fr] items-center gap-x-[3px] pr-2 pt-4">
        <span className="text-right text-[#a0a0a0]">Current Status</span>
        <div className="flex items-center">
          <Field label="Current Status" value="CANCL" icon={<LookupIcon muted />} className="h-[22px] w-[122px] border-[#cccccc] text-[#838383]" />
          <Check className="ml-[14px]">Show All Statuses</Check>
        </div>
        <span className="text-right">EDI Status Only ?</span>
        <div className="flex h-[31px] items-center"><Check label="EDI Status Only" /></div>
        <span className="text-right text-[#a0a0a0]">Current Zone</span>
        <Field label="Current Zone" value="YARD-WALS" icon={<LookupIcon muted />} className="h-[22px] w-[153px] border-[#cccccc] text-[#838383]" />
        <span className="text-right text-[#a0a0a0]">Date</span>
        <Field label="Date" value="3/12/2025 09:31:32" icon={<CalendarIcon muted />} className="mt-0.5 h-[22px] w-[153px] border-[#cccccc] text-[#838383]" />
        <label htmlFor="comment" className="pt-0.5 text-right">Comment</label>
        <div className="mt-px flex h-[22px] w-[251px] items-center border border-[#0078d7] bg-white px-0.5">
          <input
            id="comment"
            ref={comment}
            defaultValue="ENTERED FOR TRAINING, NOT A LEGITMATE LOAD"
            className="min-w-0 flex-1 outline-none"
          />
          <span className="h-[15px] w-px bg-black" />
        </div>
      </div>
      <div className="flex justify-end gap-[23px] pb-2 pr-3 pt-[38px]">
        <button type="button" className="h-[23px] w-[73px] border border-[#0078d7] bg-[#e5f1fb]">OK</button>
        <button type="button" className="h-[23px] w-[73px] border border-[#adadad] bg-[#e1e1e1]">Cancel</button>
      </div>
    </div>
  );
}

/* ---------- window chrome ---------- */

function TitleBar() {
  return (
    <header className="bg-white font-['Roboto','Noto_Sans',sans-serif] text-[12px]">
      <div className="flex h-6 items-center pl-0.5">
        <AgentIcon size={17} />
        <h1 className="ml-1 flex-1 text-[#999]">Customer Service @ ONT_LIVE [TMWIN - Pride Group Logistics]</h1>
        <button type="button" aria-label="Minimize" className="flex w-[46px] justify-center">
          <svg width="10" height="10"><path d="M0 5.500h10" stroke="#999" /></svg>
        </button>
        <button type="button" aria-label="Restore" className="flex w-[46px] justify-center">
          <svg width="10" height="10"><path d="M.5 2.500h7v7h-7zM2.500 2.500v-2h7v7h-2" fill="none" stroke="#999" /></svg>
        </button>
        <button type="button" aria-label="Close" className="mr-0.5 flex w-[46px] justify-center">
          <svg width="10" height="10"><path d="M0 0l10 10M10 0L0 10" stroke="#999" /></svg>
        </button>
      </div>
      <nav className="flex h-[19px] items-center gap-[14px] pl-[7px] text-[#6d6d6d]">
        {['File', 'Multi-Company', 'Navigate', 'View', 'Tools', 'Window', 'Help'].map(m => <button key={m} type="button">{m}</button>)}
      </nav>
    </header>
  );
}

function Tool({ label, active, children }: { label: string; active?: boolean; children: ReactNode }) {
  return (
    <button type="button" aria-label={label} className={clsx('flex h-6 w-[23px] items-center justify-center', active && 'border border-[#90c8f6] bg-[#c5dff5]')}>
      {children}
    </button>
  );
}

function Sep() {
  return <div className="mx-1 h-5 w-px bg-[#8a8a8a]" />;
}

function Toolbar() {
  return (
    <div className="flex h-[26px] items-center border-y border-[#a0a0a0]">
      <div className="-ml-px flex">
        {NAV.map(n => <Tool key={n} label={n}><NavGlyph name={n} /></Tool>)}
        <Tool label="Find"><BinocularsIcon /></Tool>
      </div>
      <Sep />
      <Tool label="Print"><PrinterIcon /></Tool>
      <Tool label="Monitor">
        <svg width="14" height="14" viewBox="0 0 14 14">
          <rect x=".5" y=".5" width="13" height="13" fill="#0c1a10" stroke="#2a86d8" />
          <rect width="14" height="3" fill="#39a0ec" />
          <path d="M1 8.500h2l1-2 1.500 4 2-5 1.500 4 1-2 1 1h2" fill="none" stroke="#2fe04a" strokeWidth="1.200" />
        </svg>
      </Tool>
      <button type="button" aria-label="More" className="flex w-[13px] justify-center"><svg width="8" height="5"><path d="M0 0h8L4 5z" /></svg></button>
      <Sep />
      <Tool label="Help">
        <svg width="15" height="15" viewBox="0 0 15 15">
          <circle cx="7.500" cy="7.500" r="6" fill="#3d8fe0" stroke="#b8c6d8" strokeWidth="2" />
          <path d="M5.500 6c0-3 4.200-2.500 4 0 0 1.500-2 1.300-2 3M7.500 10.300v1.300" fill="none" stroke="#fff" strokeWidth="1.500" />
        </svg>
      </Tool>
      <Tool label="About">
        <svg width="14" height="14" viewBox="0 0 14 14"><circle cx="7" cy="7" r="7" fill="#0f6fdc" /><path d="M7 2.500v5.500M7 9.500V12" stroke="#fff" strokeWidth="2.200" /></svg>
      </Tool>
      <Sep />
      <Tool label="Customer service" active><AgentIcon /></Tool>
      <Tool label="Dispatch"><AgentIcon kind="pc" /></Tool>
      <Tool label="Driver"><DriverIcon /></Tool>
      <Tool label="Phone"><AgentIcon kind="phone" /></Tool>
      <Tool label="Clients"><AgentIcon kind="pair" /></Tool>
      <Tool label="Routes"><SignpostIcon /></Tool>
      <Tool label="Zones"><GlobeIcon /></Tool>
      <Tool label="Filter">
        <svg width="14" height="15" viewBox="0 0 14 15"><path d="M.5 2h13L8.500 7.500V14l-3-2V7.500z" fill="#b5b5b5" stroke="#666" /><ellipse cx="7" cy="2" rx="6.500" ry="1.500" fill="#eee" stroke="#777" strokeWidth=".8" /></svg>
      </Tool>
      <Sep />
      <Tool label="Audit"><DocIcon badge="check" /></Tool>
      <Sep />
    </div>
  );
}

function StatusBar() {
  return (
    <footer className="flex h-[19px] items-center gap-px border-t border-[#d0d0d0] px-px font-['Roboto','Noto_Sans',sans-serif] text-[12px] text-white">
      <div className="mr-[3px] w-[100px] bg-[#ff0000] text-center leading-[15px]">Charges: $0.00</div>
      <div className="mr-[3px] w-[110px] bg-[#ff0000] text-center leading-[15px]">X-Charges: $0.00</div>
      <div className="mr-[3px] w-[84px] bg-[#ff0000] text-center leading-[15px]">Tax-1: $0.00</div>
      <div className="mr-[3px] w-[84px] bg-[#ff0000] text-center leading-[15px]">Tax-2: $0.00</div>
      <div className="mr-[3px] w-[102px] bg-[#ff0000] text-center leading-[15px]">Interliner: $0.00</div>
      <div className="w-[76px] bg-[#ff0000] pl-[11px] leading-[15px]">Balanced:</div>
      <div className="w-[84px] bg-[#ff0000] pl-[14px] leading-[15px]">Total: $0.00</div>
      <div className="mr-[3px] h-[15px] flex-1 bg-[#ff0000]" />
      <div className="w-[59px] bg-[#ff0000] text-center leading-[15px]">PROD5</div>
      <div className="w-[76px] bg-[#ff0000] text-center leading-[15px]">ONT_LIVE</div>
      <div className="w-[137px] bg-[#ff0000] text-center leading-[15px]">Pride Group Logistics</div>
      <div className="w-[78px] bg-[#ff0000] text-center leading-[15px]">SSARAIVA</div>
      <div className="w-12 bg-[#ff0000] text-center leading-[15px]">CAP</div>
      <div className="w-12 bg-[#ff0000] text-center leading-[15px]">NUM</div>
    </footer>
  );
}

/* ---------- taskbar ---------- */

function TaskIcon({ label, running, active, badge, children }: {
  label: string;
  running?: boolean;
  active?: boolean;
  badge?: ReactNode;
  children: ReactNode;
}) {
  return (
    <button type="button" aria-label={label} className={clsx('relative flex size-10 flex-col items-center justify-center rounded', active && 'bg-[#ebb0ac]')}>
      <svg width="24" height="24" viewBox="0 0 24 24">{children}</svg>
      {badge}
      {running && <span className={clsx('absolute bottom-px h-[3px] w-1.5 rounded-full', active ? 'bg-[#c42b1c]' : 'bg-[#8c8680]')} />}
    </button>
  );
}

function Taskbar() {
  return (
    <div className="flex h-12 items-center justify-between border-t border-[#c0b8b0] bg-linear-to-r from-[#faecd6] via-[#fbeedb] to-[#efdcd7] font-['Noto_Sans','Open_Sans',sans-serif] text-[12px] text-[#222]">
      <button type="button" className="flex w-[520px] items-center gap-1 pl-5 text-left">
        <svg width="26" height="30" viewBox="0 0 26 30">
          <circle cx="11" cy="17" r="10" fill="#f39a1e" />
          <path d="M9 22a4 4 0 0 1 4-4 5 5 0 0 1 8 2 3 3 0 0 1 0 6h-9a3 3 0 0 1-3-4z" fill="#c9dcf5" />
          <circle cx="17" cy="9" r="8" fill="#c42b1c" />
          <text x="17" y="13" textAnchor="middle" fontSize="11" fill="#fff">4</text>
        </svg>
        <span>18°F<br /><span className="text-[#6b655e]">Mostly sunny</span></span>
      </button>

      <div className="flex items-center gap-1 pb-0.5">
        <TaskIcon label="Start">
          <path d="M.5.5h11v11H.5zM12.500.5h11v11h-11zM.5 12.500h11v11H.5zM12.500 12.500h11v11h-11z" fill="#0a84dc" />
          <path d="M.5.5h11v11H.5z" fill="#41bdf5" />
        </TaskIcon>
        <label className="mr-px flex h-8 w-[220px] items-center rounded-full border border-[#e4d8c8] bg-[#fdf8f0] pl-[11px] pr-1">
          <svg width="16" height="16" viewBox="0 0 16 16"><circle cx="7" cy="6.500" r="5.300" fill="none" stroke="#222" strokeWidth="1.600" /><path d="M11 10.500l4 4.500" stroke="#222" strokeWidth="2" /></svg>
          <input type="search" aria-label="Search" placeholder="Search" className="ml-2.5 w-0 flex-1 bg-transparent text-[13px] outline-none placeholder:text-[#666]" />
          <svg width="48" height="26" viewBox="0 0 48 26">
            <path d="M0 19c8-5 38-5 47 0-3 5-10 6-23 6S3 24 0 19z" fill="#b98a4a" />
            <path d="M9 13h11l-1.500 9h-8z" fill="#3b302c" />
            <path d="M2 13c2-5 6-5 9-1l-1 4zM22 13c-1-5-4-6-7-1z" fill="#2f9a3a" />
            <path d="M14 0l3 2 4 1-1 4 1 4-5 1-4 1-3-3-2-3 3-3 1-3z" fill="#f0709c" />
            <circle cx="14" cy="6" r="1.800" fill="#f9d04a" />
            <path d="M25 18l5-8 5 4z" fill="#aebfcc" stroke="#6b7c89" strokeWidth=".6" />
            <path d="M33 11l3-3" stroke="#777" strokeWidth="1.500" />
            <path d="M36 8l6-5" stroke="#2a8ce0" strokeWidth="4" strokeLinecap="round" />
          </svg>
        </label>
        <TaskIcon label="Task view">
          <rect x="0" y="7" width="18" height="16" fill="#2c2c2c" />
          <rect x="6" y="1" width="18" height="16" fill="#f4f4f4" />
          <rect x="6" y="7" width="12" height="10" fill="#b4b4b4" />
        </TaskIcon>
        <TaskIcon label="File Explorer">
          <path d="M0 3q0-1 1-1h7l2 3H0z" fill="#d99b12" />
          <rect x="0" y="4" width="24" height="19" rx="1" fill="#fbcb45" />
          <path d="M4 23v-4q0-2 2-2h12q2 0 2 2v4z" fill="#1373c8" />
        </TaskIcon>
        <TaskIcon label="Edge" running>
          <circle cx="12" cy="12" r="12" fill="#1576c4" />
          <path d="M0 12C1 4 7 0 13 0c7 0 11 5 11 10 0 4-3 6-7 6-2 0-3-1-2.500-2.500C16 9 12 6.500 8 7c-4 .5-7 3-8 5z" fill="#38c6b4" />
          <path d="M9 13a4.500 4.500 0 0 1 5 1c0 3 4 4 7 3-2 4-7 4-9 1z" fill="#eaf6fb" />
          <rect x="0" y="16" width="12" height="8" rx="1" fill="#c46c10" />
          <path d="M4 16v-2h4v2M0 19.500h12" fill="none" stroke="#8a4705" strokeWidth="1.200" />
        </TaskIcon>
        <TaskIcon label="Store">
          <path d="M7 5V2h10v3" fill="none" stroke="#35b9f0" strokeWidth="2" />
          <rect x="0" y="5" width="24" height="18" rx="2.500" fill="#14477c" />
          <path d="M7 9h4.500v4.500H7z" fill="#f25022" /><path d="M12.500 9H17v4.500h-4.500z" fill="#7fba00" />
          <path d="M7 14.500h4.500V19H7z" fill="#00a4ef" /><path d="M12.500 14.500H17V19h-4.500z" fill="#ffb900" />
        </TaskIcon>
        <TaskIcon
          label="Lists"
          badge={<span className="absolute right-0 top-0 size-4 rounded-full bg-[#0a7ad8] text-[11px] leading-4 text-white">5</span>}
        >
          <rect width="24" height="24" fill="#1e3da8" />
          <text x="7" y="19" fontSize="18" fontWeight="700" fill="#fff">L</text>
        </TaskIcon>
        <TaskIcon
          label="Outlook"
          running
          badge={
            <svg width="16" height="16" viewBox="0 0 16 16" className="absolute right-0 top-0">
              <circle cx="8" cy="8" r="8" fill="#0f5fb5" />
              <path d="M3.500 5h9v6.500h-9zM3.500 5L8 9l4.500-4" fill="none" stroke="#fff" strokeWidth="1.200" />
            </svg>
          }
        >
          <rect x="6" y="1" width="16" height="18" fill="#1a8ad8" />
          <path d="M6 11l9 6 9-6v12H6z" fill="#37aee8" />
          <rect x="0" y="6" width="12" height="12" fill="#0f68bd" />
          <ellipse cx="6" cy="12" rx="3" ry="3.300" fill="none" stroke="#fff" strokeWidth="1.600" />
        </TaskIcon>
        <TaskIcon label="Chrome">
          <circle cx="12" cy="12" r="12" fill="#fbc116" />
          <path d="M12 12L1.600 6A12 12 0 0 1 22.400 6z" fill="#e33b2e" />
          <path d="M12 12L1.600 6A12 12 0 0 0 11 24l6-9z" fill="#2da94f" />
          <circle cx="12" cy="12" r="5.800" fill="#fff" /><circle cx="12" cy="12" r="4.500" fill="#3f7ff0" />
        </TaskIcon>
        <TaskIcon label="G Tool" running>
          <rect x="2" y="2" width="20" height="20" rx="4" fill="#2d0f70" />
          <path d="M16 8.500c-5-3-9 0-8 4 .8 3 6 3 6 0h-2.500M14 12.500l3 5H9" fill="none" stroke="#fff" strokeWidth="2" />
        </TaskIcon>
        <TaskIcon label="X Tool" running>
          <path d="M1 2l6-2 5 7 1-6 5 1-1 15H3z" fill="#f6f5f3" />
          <path d="M2 12C6 5 13 6 19 9 12 8 9 10 9 19z" fill="#f58a1e" />
          <path d="M14 12l9 10M22 12l-9 10" stroke="#f58a1e" strokeWidth="3" />
        </TaskIcon>
        <TaskIcon label="TeamViewer">
          <rect width="24" height="24" rx="1" fill="#0b6fd6" />
          <circle cx="12" cy="12" r="9.500" fill="#fff" />
          <path d="M3.500 12l5-4v3h7V8l5 4-5 4v-3h-7v3z" fill="#0b6fd6" />
        </TaskIcon>
        <TaskIcon
          label="Teams"
          running
          active
          badge={<span className="absolute right-[3px] top-[3px] size-4 rounded-full bg-[#c42b1c] text-[11px] leading-4 text-white">1</span>}
        >
          <rect x="11" y="7" width="13" height="13" rx="4" fill="#7b83eb" />
          <circle cx="14" cy="4" r="3.500" fill="#7b83eb" />
          <path d="M7 8h12v9a6 6 0 0 1-12 0z" fill="#5d66d4" />
          <rect x="0" y="6" width="12" height="12" rx="1" fill="#4650b8" />
          <path d="M3 9.500h6M6 9.500V15" stroke="#fff" strokeWidth="1.600" />
        </TaskIcon>
        <TaskIcon label="Signpost" running>
          <rect x="10.500" width="3" height="24" fill="#b3b5ae" stroke="#777" strokeWidth=".5" />
          <path d="M11 3.500H4L1 7.500 4 11h7z" fill="#27b327" stroke="#0f700f" strokeWidth=".5" />
          <path d="M13 3.500h7l3 3.500-3 4h-7z" fill="#4b80d8" stroke="#2a559e" strokeWidth=".5" />
        </TaskIcon>
        <TaskIcon label="Remote" running>
          <circle cx="12" cy="12" r="11.500" fill="#1c6cc8" />
          <path d="M19 7a8.500 8.500 0 1 0 1 7M16 9a5 5 0 1 0 .5 5" fill="none" stroke="#fff" strokeWidth="1.800" />
          <circle cx="12" cy="12" r="2" fill="#fff" />
        </TaskIcon>
      </div>

      <div className="flex w-[520px] items-center justify-end pr-[19px]">
        <svg width="12" height="8" viewBox="0 0 12 8"><path d="M1 7l5-5 5 5" fill="none" stroke="#222" strokeWidth="1.400" /></svg>
        <svg width="16" height="12" viewBox="0 0 16 12" className="ml-[18px]"><path d="M3 11a3 3 0 0 1 0-6 4.500 4.500 0 0 1 8-2 4 4 0 0 1 2 8z" fill="#1a85dc" /><path d="M3 11l8-5a4 4 0 0 1 2 5z" fill="#36b0f2" /></svg>
        <svg width="12" height="16" viewBox="0 0 12 16" className="ml-[18px]"><rect x="3.700" y=".7" width="4.600" height="9" rx="2.300" fill="none" stroke="#1d5ea8" strokeWidth="1.300" /><path d="M1 7c0 6 10 6 10 0M6 11.500V16" fill="none" stroke="#1d5ea8" strokeWidth="1.300" /></svg>
        <svg width="17" height="16" viewBox="0 0 17 16" className="ml-[18px]"><path d="M11 1H1v11h11M6 12v3M3 15.300h7M14 6v9M12 1.500h4v4h-4z" fill="none" stroke="#222" strokeWidth="1.200" /></svg>
        <svg width="15" height="14" viewBox="0 0 15 14" className="ml-2"><path d="M1 5h2.500L7 2v10L3.500 9H1zM9 5c1 1 1 3 0 4M11 3c2 2 2 6 0 8" fill="none" stroke="#222" strokeWidth="1.200" /></svg>
        <div className="ml-4 text-right">9:32 AM<br />3/12/2025</div>
      </div>
    </div>
  );
}

export default function App() {
  return (
    <div className="relative flex min-h-screen flex-col overflow-hidden bg-[#f0f0f0] font-['DejaVu_Sans_Condensed','DejaVu_Sans',sans-serif] text-[11px] leading-4 text-black">
      <TitleBar />
      <Toolbar />
      <main className="flex flex-1 flex-col">
        <div className="flex items-start pb-0.5 pt-1">
          <BillColumn />
          <div className="-mt-0.5 w-[210px] shrink-0">
            <PartyGroup p={CALLER} className="pb-0.5" />
            <div className="mt-1 border border-[#dcdcdc] p-0.5 pt-1.5">
              <div className="flex items-center justify-end gap-2">
                <span>Plan</span>
                <Btn className="h-5 w-[50px]">Mileage</Btn>
              </div>
              <Field label="Charges" value="$0.00" align="right" className="mt-1" />
            </div>
          </div>
          <PartyGroup p={SHIPPER} className="-mt-0.5 ml-[51px] w-[212px] shrink-0" />
          <PartyGroup p={CONSIGNEE} className="-mt-0.5 ml-[47px] w-[209px] shrink-0" />
          <div className="-mt-0.5 ml-4 shrink-0"><OptionsGroup /></div>
          <div className="ml-1.5 shrink-0"><ActionColumn /></div>
          <div className="ml-[13px] flex min-w-0 flex-1"><TracePanel /></div>
        </div>
        <Details />
      </main>
      <div className="h-[13px]" />
      <StatusBar />
      <Taskbar />
      <StatusDialog />
    </div>
  );
}
